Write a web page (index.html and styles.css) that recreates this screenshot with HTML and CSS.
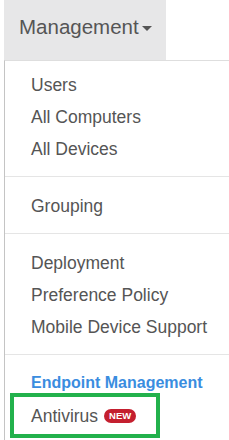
FILE: index.html
```html
<!DOCTYPE html>
<html>
<head>
<meta charset="utf-8">
<link rel="stylesheet" href="styles.css">
</head>
<body>
<div class="nav">
  <div class="tab">Management<span class="caret"></span></div>
</div>
<ul class="dropdown">
  <li class="item">Users</li>
  <li class="item">All Computers</li>
  <li class="item">All Devices</li>
  <li class="divider"></li>
  <li class="item">Grouping</li>
  <li class="divider"></li>
  <li class="item">Deployment</li>
  <li class="item">Preference Policy</li>
  <li class="item">Mobile Device Support</li>
  <li class="divider"></li>
  <li class="header">Endpoint Management</li>
  <li class="item item-hl">Antivirus<span class="badge">NEW</span><span class="highlight"></span></li>
</ul>
</body>
</html>
```

FILE: styles.css
```css
html, body {
  margin: 0;
  padding: 0;
  background: #ffffff;
  font-family: "Liberation Sans", Arial, sans-serif;
  overflow: hidden;
}

.nav {
  display: flex;
  padding-left: 4px;
}

.tab {
  width: 162px;
  height: 60px;
  box-sizing: border-box;
  background: #e7e7e8;
  padding: 15px 0 0 15px;
  font-size: 20.5px;
  line-height: 23px;
  color: #555555;
}

.caret {
  display: inline-block;
  width: 0;
  height: 0;
  margin-left: 3px;
  vertical-align: middle;
  border-top: 5px solid #555555;
  border-left: 5.5px solid transparent;
  border-right: 5.5px solid transparent;
}

.dropdown {
  list-style: none;
  margin: 0 0 0 4px;
  padding: 8px 0 0 0;
  background: #ffffff;
  border-left: 1px solid #c4c4c4;
  border-top: 1px solid #dedede;
  height: 371px;
}

.item {
  position: relative;
  padding-left: 26px;
  font-size: 17.5px;
  line-height: 32px;
  height: 32px;
  color: #555555;
  white-space: nowrap;
}

.divider {
  height: 1px;
  margin: 11px 0 13px 0;
  background: #e5e5e5;
}

.header {
  padding-left: 26px;
  font-size: 16px;
  font-weight: bold;
  line-height: 30px;
  height: 30px;
  margin-bottom: 2px;
  color: #3a8ddf;
  white-space: nowrap;
}

.badge {
  display: inline-block;
  vertical-align: middle;
  margin-left: 6px;
  margin-top: -3px;
  width: 32px;
  height: 14px;
  border-radius: 7px;
  background: #c41f2f;
  color: #ffffff;
  font-size: 9.5px;
  font-weight: bold;
  line-height: 14px;
  text-align: center;
}

.highlight {
  position: absolute;
  left: 5px;
  top: -7px;
  width: 150px;
  height: 45px;
  box-sizing: border-box;
  border: 4.5px solid #22b14c;
}
```
